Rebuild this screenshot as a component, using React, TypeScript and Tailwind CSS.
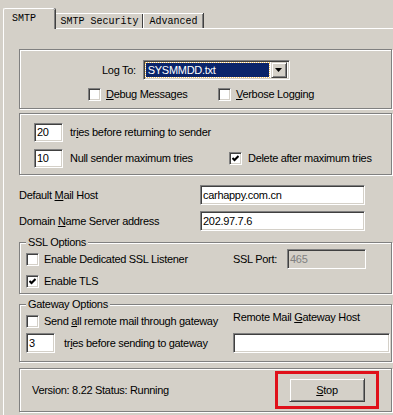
const sunken =
  "border border-t-[#808080] border-l-[#808080] border-b-white border-r-white shadow-[inset_1px_1px_0_#404040,inset_-1px_-1px_0_#d4d0c8]";
const raised =
  "border border-t-[#d4d0c8] border-l-[#d4d0c8] border-b-[#404040] border-r-[#404040] shadow-[inset_1px_1px_0_#fff,inset_-1px_-1px_0_#808080]";
const etched = "border border-[#808080] shadow-[inset_1px_1px_0_#fff,1px_1px_0_#fff]";

const U = ({ children }: { children: string }) => (
  <span className="underline underline-offset-[1px]">{children}</span>
);

const Check = ({ checked }: { checked?: boolean }) => (
  <span className={`flex h-[13px] w-[13px] shrink-0 items-center justify-center bg-white ${sunken}`}>
    {checked && (
      <svg width="7" height="7" viewBox="0 0 7 7">
        <path d="M0.5 3 L2.5 5 L6.5 1" stroke="black" strokeWidth="2" fill="none" />
      </svg>
    )}
  </span>
);

const Field = ({ value, className }: { value: string; className: string }) => (
  <div className={`flex items-center bg-white pl-[2px] ${sunken} ${className}`}>{value}</div>
);

const Legend = ({ text }: { text: string }) => (
  <div className="-mt-[7px] ml-[6px] h-[13px] w-fit bg-[#d4d0c8] px-[2px]">{text}</div>
);

export default function App() {
  return (
    <div className="h-[415px] w-[393px] overflow-hidden bg-[#d4d0c8] font-['Liberation_Sans',Arial,sans-serif] text-[11px] leading-[13px] tracking-[-0.3px] text-black">
      {/* Tabs */}
      <div className="flex h-[28px] items-end pl-[3px] font-['Liberation_Mono',monospace] text-[10px] leading-[11px] tracking-normal">
        <div className="relative z-10 -mb-px h-[21px] w-[52px] rounded-t-[2px] border-l border-t border-white bg-[#d4d0c8] pl-[8px] pt-[4px] shadow-[inset_-1px_0_0_#808080,1px_0_0_#404040]">
          SMTP
        </div>
        <div className="flex h-[15px] w-[88px] items-center justify-center border-t border-l border-white shadow-[inset_-1px_0_0_#404040]">
          SMTP Security
        </div>
        <div className="flex h-[15px] w-[60px] items-center justify-center border-t border-l border-white shadow-[inset_-1px_0_0_#808080,1px_0_0_#404040]">
          Advanced
        </div>
      </div>

      {/* Tab page */}
      <div className="ml-[3px] h-[400px] w-[420px] border-l border-t border-white pl-[15px] pt-[20px]">
        {/* Logging */}
        <div className={`h-[60px] w-[373px] pt-[10px] ${etched}`}>
          <div className="flex h-[20px] items-center gap-[7px] pl-[82px]">
            <span>Log To:</span>
            <div className={`flex h-[20px] w-[147px] items-center gap-[2px] bg-white p-[2px] ${sunken}`}>
              <div className="flex h-full flex-1 items-center bg-[#0a246a] pl-[2px] text-white outline-1 outline-dotted outline-[#f0c060]">
                SYSMMDD.txt
              </div>
              <div className={`flex h-[16px] w-[16px] items-center justify-center bg-[#d4d0c8] ${raised}`}>
                <svg width="7" height="4" viewBox="0 0 7 4">
                  <path d="M0 0 H7 L3.5 4 Z" fill="black" />
                </svg>
              </div>
            </div>
          </div>
          <div className="mt-[8px] flex h-[13px] items-center pl-[68px]">
            <span className="flex w-[130px] items-center gap-[5px]">
              <Check />
              <span>
                <U>D</U>ebug Messages
              </span>
            </span>
            <span className="flex items-center gap-[5px]">
              <Check />
              <span>
                <U>V</U>erbose Logging
              </span>
            </span>
          </div>
        </div>

        {/* Retries */}
        <div className={`mt-[4px] h-[62px] w-[373px] pl-[14px] pt-[9px] ${etched}`}>
          <div className="flex h-[19px] items-center">
            <Field value="20" className="h-[19px] w-[29px]" />
            <span className="ml-[7px]">
              tr<U>i</U>es before returning to sender
            </span>
          </div>
          <div className="mt-[7px] flex h-[19px] items-center">
            <Field value="10" className="h-[19px] w-[29px]" />
            <span className="ml-[7px] w-[159px]">Null sender maximum tries</span>
            <span className="flex items-center gap-[6px]">
              <Check checked />
              <span>Delete after maximum tries</span>
            </span>
          </div>
        </div>

        {/* Hosts */}
        <div className="mt-[10px] flex h-[20px] items-center">
          <span className="w-[181px]">
            Default <U>M</U>ail Host
          </span>
          <Field value="carhappy.com.cn" className="h-[20px] w-[165px]" />
        </div>
        <div className="mt-[6px] flex h-[20px] items-center">
          <span className="w-[181px]">
            Domain <U>N</U>ame Server address
          </span>
          <Field value="202.97.7.6" className="h-[20px] w-[165px]" />
        </div>

        {/* SSL Options */}
        <div className={`mt-[11px] h-[52px] w-[373px] ${etched}`}>
          <Legend text="SSL Options" />
          <div className="flex h-[20px] items-center pl-[6px]">
            <span className="flex w-[207px] items-center gap-[5px]">
              <Check />
              <span>Enable Dedicated SSL Listener</span>
            </span>
            <span className="w-[54px]">SSL Port:</span>
            <div className={`flex h-[20px] w-[79px] items-center bg-[#d4d0c8] pl-[2px] text-[#808080] ${sunken}`}>
              465
            </div>
          </div>
          <div className="mt-[2px] flex h-[20px] items-center gap-[5px] pl-[6px]">
            <Check checked />
            <span>Enable TLS</span>
          </div>
        </div>

        {/* Gateway Options */}
        <div className={`mt-[10px] h-[58px] w-[373px] ${etched}`}>
          <Legend text="Gateway Options" />
          <div className="mt-[3px] flex h-[14px] items-center pl-[6px]">
            <span className="flex w-[207px] items-center gap-[5px]">
              <Check />
              <span>
                Send <U>a</U>ll remote mail through gateway
              </span>
            </span>
            <span className="mb-[8px]">
              Remote Mail <U>G</U>ateway Host
            </span>
          </div>
          <div className="mt-[5px] flex h-[20px] items-center pl-[6px]">
            <Field value="3" className="h-[20px] w-[29px]" />
            <span className="ml-[9px] w-[169px]">
              tr<U>i</U>es before sending to gateway
            </span>
            <Field value="" className="h-[20px] w-[157px]" />
          </div>
        </div>

        {/* Status */}
        <div className={`mt-[6px] flex h-[44px] w-[373px] items-center justify-between pl-[12px] pr-[12px] ${etched}`}>
          <span>Version: 8.22 Status: Running</span>
          <div className="border-[3px] border-[#e0101a] px-[11px] py-[4px]">
            <button className={`flex h-[24px] w-[76px] items-center justify-center bg-[#d4d0c8] ${raised}`}>
              <span>
                <U>S</U>top
              </span>
            </button>
          </div>
        </div>
      </div>
    </div>
  );
}
